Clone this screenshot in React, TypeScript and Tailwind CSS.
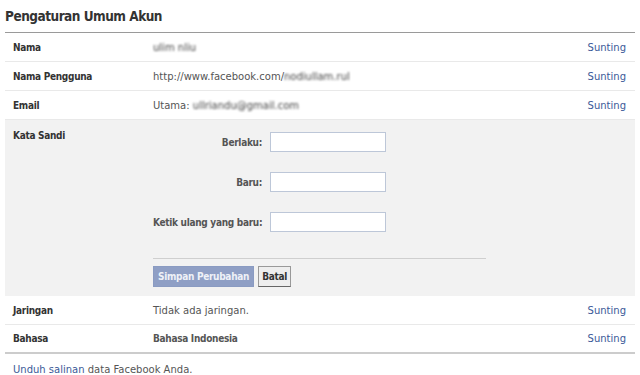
import React from 'react';

type Row = { label: string; value: React.ReactNode; bold?: boolean };

// masked personal data in the screenshot
const Blur = ({ children }: { children: string }) => (
  <span className="inline-block text-[#444] [filter:blur(0.9px)]">{children}</span>
);

const boldCls = 'font-bold [font-family:DejaVu_Sans_Condensed,Tahoma,sans-serif] tracking-[-0.3px]';

const topRows: Row[] = [
  { label: 'Nama', value: <Blur>ulim nliu</Blur> },
  {
    label: 'Nama Pengguna',
    value: (
      <span>
        http://www.facebook.com/<Blur>nodiullam.rul</Blur>
      </span>
    ),
  },
  {
    label: 'Email',
    value: (
      <span>
        Utama: <Blur>ullriandu@gmail.com</Blur>
      </span>
    ),
  },
];

const bottomRows: Row[] = [
  { label: 'Jaringan', value: 'Tidak ada jaringan.' },
  { label: 'Bahasa', value: 'Bahasa Indonesia', bold: true },
];

const SettingRow = ({ row, last }: { row: Row; last?: boolean }) => (
  <div
    className={`flex items-center h-[29px] pl-2 pr-[9px] ${
      last ? 'border-b-2 border-[#cccccc]' : 'border-b border-[#e9e9e9]'
    }`}
  >
    <div className={`w-[140px] text-[#333] ${boldCls}`}>{row.label}</div>
    <div className={`flex-1 text-[#555] ${row.bold ? boldCls : ''}`}>{row.value}</div>
    <span className="text-[#3b5998] cursor-pointer">Sunting</span>
  </div>
);

const fields = ['Berlaku:', 'Baru:', 'Ketik ulang yang baru:'];

export default function App() {
  return (
    <div className="bg-white w-[640px] h-[375px] px-[5px] text-[10px] [font-family:DejaVu_Sans,Tahoma,sans-serif]">
      <h1 className="h-[32px] flex items-center text-[13.5px] text-[#333] pt-[1px] font-bold [font-family:DejaVu_Sans_Condensed,Tahoma,sans-serif] tracking-[-0.5px]">
        Pengaturan Umum Akun
      </h1>
      <div className="border-t border-[#9a9a9a]">
        {topRows.map((r) => (
          <SettingRow key={r.label} row={r} />
        ))}

        {/* password editor */}
        <div className="flex bg-[#f2f2f2] pl-2 pt-[8px] pb-[9px]">
          <div className={`w-[140px] text-[#333] ${boldCls}`}>Kata Sandi</div>
          <div className="flex flex-col pt-[4px]">
            <div className="flex flex-col gap-[20px]">
              {fields.map((f) => (
                <div key={f} className="flex items-center">
                  <label className={`w-[109px] text-right whitespace-nowrap text-[#555] ${boldCls}`}>{f}</label>
                  <input className="ml-[8px] w-[116px] h-[20px] bg-white border border-[#bdc7d8]" />
                </div>
              ))}
            </div>
            <div className="mt-[26px] w-[333px] border-t border-[#cfcfcf]" />
            <div className="flex gap-[4px] mt-[7px]">
              <button className={`h-[21px] px-[4px] bg-[#8f9fc5] border border-[#8a9bc2] text-[#eef1f7] ${boldCls}`}>
                Simpan Perubahan
              </button>
              <button className={`h-[21px] px-[3px] bg-[#eeeeee] border border-[#999] border-b-[#666] text-[#333] ${boldCls}`}>
                Batal
              </button>
            </div>
          </div>
        </div>

        {bottomRows.map((r, i) => (
          <SettingRow key={r.label} row={r} last={i === bottomRows.length - 1} />
        ))}
      </div>
      <div className="pl-2 pt-[8px] text-[#555]">
        <span className="text-[#3b5998] cursor-pointer">Unduh salinan</span> data Facebook Anda.
      </div>
    </div>
  );
}
